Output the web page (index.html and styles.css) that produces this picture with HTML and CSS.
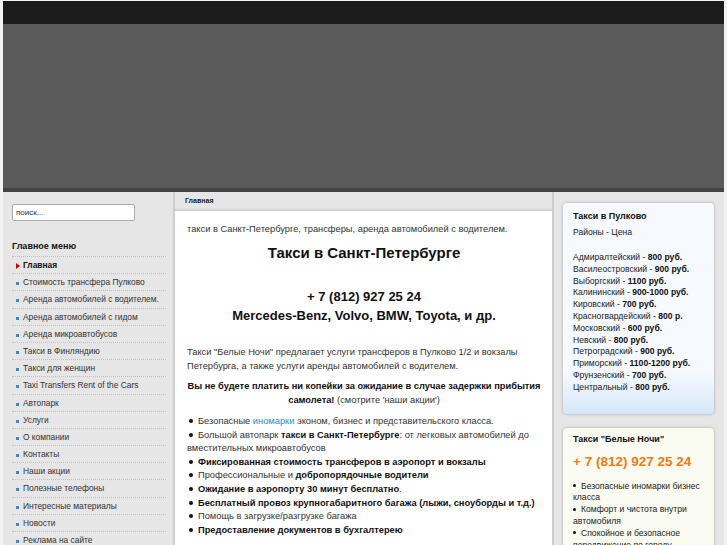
FILE: index.html
```html
<!DOCTYPE html>
<html lang="ru">
<head>
    <meta charset="UTF-8">
    <title>Такси в Санкт-Петербурге</title>
    <link rel="stylesheet" href="styles.css">
</head>
<body>
    <div class="page">
        <div class="topbar"></div>
        <div class="banner"></div>

        <div class="columns">
            <div class="left">
                <input class="search" type="text" value="поиск...">

                <h3 class="menu-title">Главное меню</h3>
                <ul class="menu">
                    <li class="active">Главная</li>
                    <li>Стоимость трансфера Пулково</li>
                    <li>Аренда автомобилей с водителем.</li>
                    <li>Аренда автомобилей с гидом</li>
                    <li>Аренда микроавтобусов</li>
                    <li>Такси в Финляндию</li>
                    <li>Такси для женщин</li>
                    <li>Taxi Transfers Rent of the Cars</li>
                    <li>Автопарк</li>
                    <li>Услуги</li>
                    <li>О компании</li>
                    <li>Контакты</li>
                    <li>Наши акции</li>
                    <li>Полезные телефоны</li>
                    <li>Интересные материалы</li>
                    <li>Новости</li>
                    <li>Реклама на сайте</li>
                </ul>
            </div>

            <div class="center">
                <div class="crumb">Главная</div>
                <div class="article">
                    <p class="intro">такси в Санкт-Петербурге, трансферы, аренда автомобилей с водителем.</p>
                    <h1>Такси в Санкт-Петербурге</h1>
                    <h2 class="phone">+ 7 (812) 927 25 24</h2>
                    <h2>Mercedes-Benz, Volvo, BMW, Toyota, и др.</h2>

                    <p class="text">Такси "Белые Ночи" предлагает услуги трансферов в Пулково 1/2 и вокзалы Петербурга, а также услуги аренды автомобилей с водителем.</p>
                    <p class="notice"><b>Вы не будете платить ни копейки за ожидание в случае задержки прибытия самолета!</b> (смотрите 'наши акции')</p>

                    <ul class="features">
                        <li>Безопасные <a href="#">иномарки</a> эконом, бизнес и представительского класса.</li>
                        <li>Большой автопарк <b>такси в Санкт-Петербурге</b>: от легковых автомобилей до вместительных микроавтобусов</li>
                        <li><b>Фиксированная стоимость трансферов в аэропорт и вокзалы</b></li>
                        <li>Профессиональные и <b>добропорядочные водители</b></li>
                        <li><b>Ожидание в аэропорту 30 минут бесплатно</b>.</li>
                        <li><b>Бесплатный провоз крупногабаритного багажа (лыжи, сноуборды и т.д.)</b></li>
                        <li>Помощь в загрузке/разгрузке багажа</li>
                        <li><b>Предоставление документов в бухгалтерею</b></li>
                    </ul>
                </div>
            </div>

            <div class="right">
                <div class="box box-blue">
                    <h3>Такси в Пулково</h3>
                    <p>Районы - Цена</p>
                    <ul class="prices">
                        <li>Адмиралтейский - <b>800 руб.</b></li>
                        <li>Василеостровский - <b>900 руб.</b></li>
                        <li>Выборгский - <b>1100 руб.</b></li>
                        <li>Калининский - <b>900-1000 руб.</b></li>
                        <li>Кировский - <b>700 руб.</b></li>
                        <li>Красногвардейский - <b>800 р.</b></li>
                        <li>Московский - <b>600 руб.</b></li>
                        <li>Невский - <b>800 руб.</b></li>
                        <li>Петроградский - <b>900 руб.</b></li>
                        <li>Приморский - <b>1100-1200 руб.</b></li>
                        <li>Фрунзенский - <b>700 руб.</b></li>
                        <li>Центральный - <b>800 руб.</b></li>
                    </ul>
                </div>

                <div class="box box-cream">
                    <h3>Такси "Белые Ночи"</h3>
                    <div class="orange-phone">+ 7 (812) 927 25 24</div>
                    <ul class="perks">
                        <li>Безопасные иномарки бизнес класса</li>
                        <li>Комфорт и чистота внутри автомобиля</li>
                        <li>Спокойное и безопасное передвижение по городу</li>
                    </ul>
                </div>
            </div>
        </div>
    </div>
</body>
</html>
```

FILE: styles.css
```css
body {
    font-family: "Liberation Sans", Arial, sans-serif;
    background-color: #f2f2f2;
    margin: 0;
    color: #222;
    overflow: hidden;
}
.page {
    margin: 0 3px;
    background: #e6e6e6;
}
.topbar {
    height: 23px;
    margin-top: 1px;
    background: #1b1b1b;
}
.banner {
    height: 164px;
    background: #5a5a5a;
    border-bottom: 4px solid #434343;
}
.columns {
    display: flex;
    align-items: stretch;
    min-height: 360px;
}

/* left column */
.left {
    width: 172px;
    flex: none;
    padding: 12px 7px 0 9px;
    box-sizing: border-box;
    background: #e6e6e6;
    border-right: 2px solid #cdcdcd;
}
.search {
    display: block;
    width: 123px;
    height: 17px;
    box-sizing: border-box;
    border: 1px solid #a9a9a9;
    border-radius: 2px;
    padding: 0 3px;
    font-family: "Liberation Sans", Arial, sans-serif;
    font-size: 8px;
    color: #333;
    background: white;
}
.menu-title {
    font-size: 9px;
    font-weight: bold;
    color: #111;
    margin: 20px 0 0 0;
    padding-bottom: 5px;
    border-bottom: 1px dotted #c0c0c0;
}
.menu {
    list-style: none;
    margin: 0;
    padding: 0;
}
.menu li {
    height: 17.2px;
    line-height: 16px;
    border-bottom: 1px dotted #c0c0c0;
    font-size: 8.4px;
    color: #333;
    padding-left: 11px;
    position: relative;
    box-sizing: border-box;
}
.menu li::before {
    content: "";
    position: absolute;
    left: 4px;
    top: 8px;
    width: 3px;
    height: 3px;
    background: #3b86d6;
}
.menu li.active {
    font-weight: bold;
    color: #111;
}
.menu li.active::before {
    top: 6px;
    width: 0;
    height: 0;
    background: none;
    border-left: 4px solid #d40000;
    border-top: 3px solid transparent;
    border-bottom: 3px solid transparent;
}

/* center column */
.center {
    flex: 1;
    background: white;
}
.crumb {
    height: 17px;
    line-height: 17px;
    background: #e6e6e6;
    border-bottom: 2px solid #d2d2d2;
    font-size: 7px;
    font-weight: bold;
    color: #222;
    padding-left: 10px;
}
.article {
    padding: 10px 11px 0 12px;
    font-size: 9.3px;
    color: #333;
}
.article p {
    margin: 0;
}
.intro {
    line-height: 16px;
}
.article h1 {
    font-size: 15px;
    text-align: center;
    color: #111;
    margin: 7px 0 0 0;
    line-height: 18px;
}
.article h2 {
    font-size: 13px;
    text-align: center;
    color: #111;
    margin: 0;
    line-height: 19px;
}
.article h2.phone {
    margin-top: 25px;
}
.text {
    line-height: 14px;
    margin-top: 20px !important;
}
.notice {
    text-align: center;
    line-height: 14px;
    margin-top: 6px !important;
}
.notice b {
    color: #111;
}
.features {
    list-style: none;
    margin: 8px 0 0 0;
    padding: 0;
}
.features li {
    line-height: 13.6px;
}
.features li::before,
.perks li::before {
    content: "";
    display: inline-block;
    width: 4px;
    height: 4px;
    border-radius: 50%;
    background: #111;
    margin: 0 5px 1px 2px;
    vertical-align: middle;
}
.features b {
    color: #111;
}
.features a {
    color: #2b8ad6;
    text-decoration: none;
}

/* right column */
.right {
    width: 172px;
    flex: none;
    padding: 11px 10px 0 9px;
    box-sizing: border-box;
    background: #e6e6e6;
    border-left: 2px solid #cdcdcd;
}
.box {
    border-radius: 4px;
    box-shadow: 0 0 3px rgba(0,0,0,0.3);
    padding: 5px 10px 10px 10px;
    font-size: 8.6px;
    color: #222;
    margin-bottom: 14px;
}
.box h3 {
    font-size: 9px;
    font-weight: bold;
    color: #111;
    margin: 0;
    line-height: 16px;
}
.box p {
    margin: 1px 0 0 0;
    line-height: 14px;
}
.box-blue {
    background: linear-gradient(#f6faff 0%, #f6faff 80%, #d5e7f8 100%);
    padding-bottom: 20px;
}
.prices {
    list-style: none;
    margin: 13px 0 0 0;
    padding: 0;
}
.prices li {
    line-height: 11.8px;
}
.prices b {
    color: #111;
}
.box-cream {
    background: #fbfcf1;
    padding-top: 3px;
}
.orange-phone {
    color: #f37a10;
    font-size: 13.5px;
    font-weight: bold;
    margin-top: 6px;
    line-height: 18px;
}
.perks {
    list-style: none;
    margin: 10px 0 0 0;
    padding: 0;
}
.perks li {
    line-height: 11.8px;
}
.perks li::before {
    width: 3px;
    height: 3px;
    margin-left: 0;
}
```
